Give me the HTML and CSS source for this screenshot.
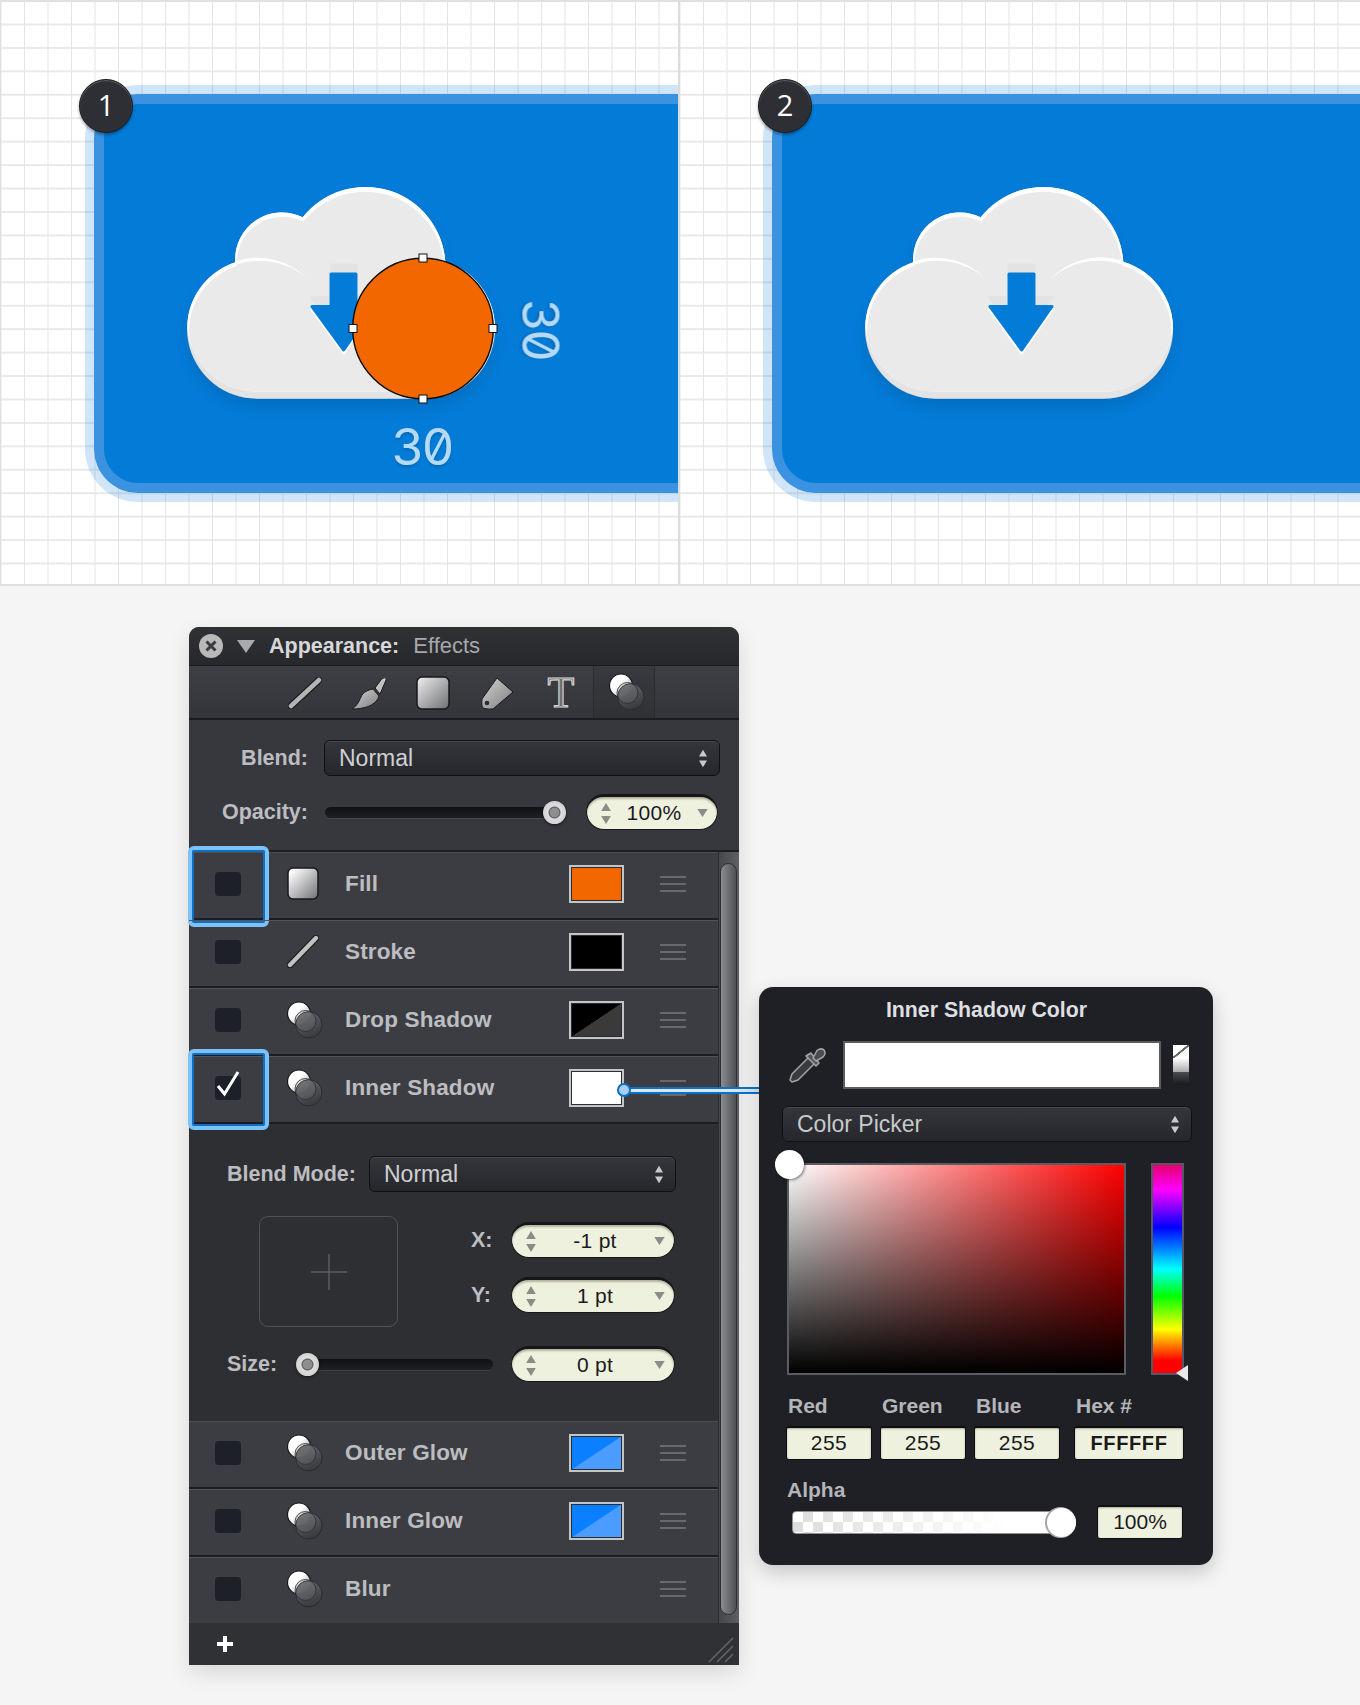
FILE: index.html
```html
<!DOCTYPE html>
<html lang="en">
<head>
<meta charset="utf-8">
<title>Appearance: Effects</title>
<link rel="stylesheet" href="styles.css">
</head>
<body>
<svg class="defs" aria-hidden="true">
  <defs>
    <linearGradient id="whiteball" x1="0.1" y1="0.1" x2="0.9" y2="0.9"><stop offset="0.4" stop-color="#fff"/><stop offset="1" stop-color="#9a9a9a"/></linearGradient>
    <linearGradient id="darkball" x1="0.2" y1="0" x2="0.6" y2="1"><stop offset="0" stop-color="#6a6b6e"/><stop offset="1" stop-color="#38393c"/></linearGradient>
    <linearGradient id="fillsq" x1="0" y1="0" x2="1" y2="1"><stop offset="0.1" stop-color="#fff"/><stop offset="1" stop-color="#6f7073"/></linearGradient>
    <linearGradient id="toolgrey" x1="0" y1="0" x2="1" y2="1"><stop offset="0" stop-color="#d2d2d2"/><stop offset="1" stop-color="#7d7d7d"/></linearGradient>
    <linearGradient id="toolsq" x1="0" y1="0" x2="1" y2="1"><stop offset="0.05" stop-color="#e8e8e8"/><stop offset="1" stop-color="#6e6f72"/></linearGradient>
    <filter id="cloudshadow" x="-15%" y="-15%" width="130%" height="140%"><feDropShadow dx="0" dy="9" stdDeviation="7" flood-color="#00518f" flood-opacity="0.3"/></filter>
    <filter id="numshadow" x="-20%" y="-20%" width="140%" height="140%"><feDropShadow dx="0" dy="2" stdDeviation="1.5" flood-color="#00518f" flood-opacity="0.5"/></filter>
    <path id="cloudpath" d="M176.7 238.7A70 70 0 0 1 153.3 102.2A46.7 46.7 0 0 1 220.7 57.3A80 80 0 0 1 363.3 101.7A70 70 0 0 1 341.7 238.7Z"/>
    <path id="arrowpath" d="M249 114H274V146.500H292L261.700 190L230 146.500H249Z"/>
    <clipPath id="cloudclip"><use href="#cloudpath"/></clipPath>
    <clipPath id="cloudbody"><use href="#cloudpath" transform="translate(0,-7)"/></clipPath>
    <g id="cloud">
      <g filter="url(#cloudshadow)"><use href="#cloudpath" fill="#e3e3e3"/></g>
      <g clip-path="url(#cloudclip)">
        <use href="#cloudpath" transform="translate(0,-7)" fill="#fff"/>
        <g clip-path="url(#cloudbody)">
          <use href="#cloudpath" transform="translate(262,153) scale(.988,.985) translate(-262,-150)" fill="#eaeaea"/>
        </g>
        <path d="M153 101.500A70 70 0 0 1 226 119A73 73 0 0 0 153 105Z" fill="#fff"/>
        <path d="M363.500 101A70 70 0 0 0 290 119.500A73 73 0 0 1 363.500 105Z" fill="#fff"/>
      </g>
      <use href="#arrowpath" transform="translate(0,-9)" fill="#e3e3e3" stroke="#e3e3e3" stroke-width="3" stroke-linejoin="round"/>
      <use href="#arrowpath" transform="translate(0,3)" fill="#fff" stroke="#fff" stroke-width="3" stroke-linejoin="round"/>
      <use href="#arrowpath" fill="#037cd8" stroke="#037cd8" stroke-width="3" stroke-linejoin="round"/>
    </g>
    <symbol id="fx" viewBox="0 0 36 38">
      <circle cx="12" cy="12.500" r="11.500" fill="url(#whiteball)" stroke="#141518" stroke-width="1.200"/>
      <circle cx="21.800" cy="23.800" r="13.200" fill="url(#darkball)" fill-opacity=".95" stroke="#2a2b2e" stroke-width="1"/>
      <circle cx="18.500" cy="20" r="10.500" fill="#8a8b8e" fill-opacity=".2" stroke="#2a2b2e" stroke-width=".8"/>
    </symbol>
    <symbol id="updown" viewBox="0 0 12 26">
      <path d="M6 0L12 10H0ZM6 26L0 16H12Z" fill="currentColor"/>
    </symbol>
    <symbol id="tri" viewBox="0 0 13 10"><path d="M0 0H13L6.500 10Z" fill="currentColor"/></symbol>
    <symbol id="lines" viewBox="0 0 26 16"><path d="M0 1H26M0 8H26M0 15H26" stroke="#77787c" stroke-width="1.600" fill="none"/></symbol>
  </defs>
</svg>

<main class="page">
  <section class="artboards">
    <div class="pane pane-first">
      <span class="badge">1</span>
      <div class="card">
        <svg class="art" viewBox="0 0 574 379" width="574" height="379">
          <use href="#cloud" transform="translate(-22,56)"/>
          <circle cx="319" cy="224.500" r="70.300" fill="#f26700" stroke="#0c0c0c" stroke-width="1.400"/>
          <g fill="#fff" stroke="#111" stroke-width="1">
            <rect x="315" y="150" width="8" height="8"/><rect x="315" y="291" width="8" height="8"/>
            <rect x="245" y="220.500" width="8" height="8"/><rect x="385" y="220.500" width="8" height="8"/>
          </g>
          <text class="dim" x="317.500" y="360.500" text-anchor="middle" filter="url(#numshadow)">30</text>
          <text class="dim" transform="translate(418.500,225) rotate(90)" text-anchor="middle" filter="url(#numshadow)">30</text>
        </svg>
      </div>
    </div>
    <div class="pane pane-second">
      <span class="badge">2</span>
      <div class="card">
        <svg class="art" viewBox="0 0 574 379" width="574" height="379">
          <use href="#cloud" transform="translate(-22,56)"/>
        </svg>
      </div>
    </div>
  </section>

  <section class="workspace">
    <div class="panel">
      <header class="panel-head">
        <span class="close"><svg viewBox="0 0 24 24" width="24" height="24"><circle cx="12" cy="12" r="12" fill="#b9b9ba"/><path d="M7.500 7.500L16.500 16.500M16.500 7.500L7.500 16.500" stroke="#3a3b3e" stroke-width="3"/></svg></span>
        <svg class="disclose" viewBox="0 0 18 13" width="18" height="13"><path d="M0 0H18L9 13Z" fill="#a9aaac"/></svg>
        <strong class="head-title">Appearance:</strong>
        <span class="head-sub">Effects</span>
      </header>

      <nav class="toolbar">
        <span class="tool"><svg viewBox="0 0 34 32" width="34" height="32"><path d="M3 29L31 3" stroke="#18191b" stroke-width="7" stroke-linecap="round"/><path d="M3 29L31 3" stroke="#b4b4b4" stroke-width="4.500" stroke-linecap="round"/></svg></span>
        <span class="tool"><svg viewBox="0 0 37 33" width="37" height="33"><path d="M24 11L31 1.500Q34 -.5 35.500 2L29 17Z" fill="#c2c2c2" stroke="#18191b"/><path d="M22 12L28 19C26 26 18 32 1 32C7 28 8 24 10 20C12 15 17 13 22 12Z" fill="url(#toolgrey)" stroke="#18191b"/></svg></span>
        <span class="tool"><svg viewBox="0 0 34 34" width="34" height="34"><rect x="1" y="1" width="32" height="32" rx="5" fill="url(#toolsq)" stroke="#18191b" stroke-width="1.500"/></svg></span>
        <span class="tool"><svg viewBox="0 0 33 33" width="33" height="33"><path d="M16 1L32 15L12 32Q9 32.500 3 31.500Q0 30.500 1 22Z" fill="url(#toolgrey)" stroke="#18191b"/><circle cx="6" cy="26" r="2.300" fill="#2b2c2f"/></svg></span>
        <span class="tool tool-t">T</span>
        <span class="tool tool-active"><svg width="36" height="38"><use href="#fx"/></svg></span>
      </nav>

      <div class="global">
        <div class="g-row">
          <span class="g-label">Blend:</span>
          <div class="select select-wide"><span>Normal</span><svg class="sel-arrows" width="8" height="19"><use href="#updown"/></svg></div>
        </div>
        <div class="g-row g-row-opacity">
          <span class="g-label">Opacity:</span>
          <div class="slider slider-opacity"><i class="knob knob-end"></i></div>
          <div class="pill pill-opacity"><svg class="pill-ud" width="10" height="21"><use href="#updown"/></svg><span class="pill-val">100%</span><svg class="pill-tri" width="11" height="8"><use href="#tri"/></svg></div>
        </div>
      </div>

      <div class="rows">
        <div class="row">
          <span class="check"></span>
          <svg width="32" height="33" viewBox="0 0 32 33"><rect x="1" y="1" width="30" height="31" rx="5" fill="url(#fillsq)" stroke="#17181a" stroke-width="1.500"/></svg>
          <span class="row-label">Fill</span>
          <span class="swatch swatch-orange"></span>
          <svg class="lines" width="26" height="16"><use href="#lines"/></svg>
          <span class="focus focus-first"></span>
        </div>
        <div class="row">
          <span class="check"></span>
          <svg width="32" height="33" viewBox="0 0 32 33"><path d="M3 30L29 3" stroke="#18191b" stroke-width="6.500" stroke-linecap="round"/><path d="M3 30L29 3" stroke="#c2c2c2" stroke-width="4.400" stroke-linecap="round"/></svg>
          <span class="row-label">Stroke</span>
          <span class="swatch swatch-black"></span>
          <svg class="lines" width="26" height="16"><use href="#lines"/></svg>
        </div>
        <div class="row">
          <span class="check"></span>
          <svg class="fx" width="36" height="38"><use href="#fx"/></svg>
          <span class="row-label">Drop Shadow</span>
          <span class="swatch swatch-shadow"></span>
          <svg class="lines" width="26" height="16"><use href="#lines"/></svg>
        </div>
        <div class="row">
          <span class="check check-on"><svg viewBox="0 0 26 30" width="26" height="30"><path d="M3 18L9.500 26L23 4" fill="none" stroke="#fff" stroke-width="3"/></svg></span>
          <svg class="fx" width="36" height="38"><use href="#fx"/></svg>
          <span class="row-label">Inner Shadow</span>
          <span class="swatch swatch-white"></span>
          <svg class="lines" width="26" height="16"><use href="#lines"/></svg>
          <span class="focus focus-second"></span>
          <span class="wire"><i class="wire-dot"></i></span>
        </div>
      </div>

      <div class="detail">
        <div class="d-blend">
          <span class="d-label">Blend Mode:</span>
          <div class="select select-mode"><span>Normal</span><svg class="sel-arrows" width="8" height="19"><use href="#updown"/></svg></div>
        </div>
        <div class="d-offset">
          <div class="origin"><svg viewBox="0 0 36 36" width="36" height="36"><path d="M18 0V36M0 18H36" stroke="#5c5d61" stroke-width="1.500"/></svg></div>
          <div class="d-fields">
            <div class="d-field"><span class="d-axis">X:</span><div class="pill pill-num"><svg class="pill-ud" width="10" height="21"><use href="#updown"/></svg><span class="pill-val">-1 pt</span><svg class="pill-tri" width="11" height="8"><use href="#tri"/></svg></div></div>
            <div class="d-field"><span class="d-axis">Y:</span><div class="pill pill-num"><svg class="pill-ud" width="10" height="21"><use href="#updown"/></svg><span class="pill-val">1 pt</span><svg class="pill-tri" width="11" height="8"><use href="#tri"/></svg></div></div>
          </div>
        </div>
        <div class="d-size">
          <span class="d-size-label">Size:</span>
          <div class="slider slider-size"><i class="knob knob-start"></i></div>
          <div class="pill pill-num"><svg class="pill-ud" width="10" height="21"><use href="#updown"/></svg><span class="pill-val">0 pt</span><svg class="pill-tri" width="11" height="8"><use href="#tri"/></svg></div>
        </div>
      </div>

      <div class="rows rows-lower">
        <div class="row">
          <span class="check"></span>
          <svg class="fx" width="36" height="38"><use href="#fx"/></svg>
          <span class="row-label">Outer Glow</span>
          <span class="swatch swatch-blue"></span>
          <svg class="lines" width="26" height="16"><use href="#lines"/></svg>
        </div>
        <div class="row">
          <span class="check"></span>
          <svg class="fx" width="36" height="38"><use href="#fx"/></svg>
          <span class="row-label">Inner Glow</span>
          <span class="swatch swatch-blue"></span>
          <svg class="lines" width="26" height="16"><use href="#lines"/></svg>
        </div>
        <div class="row row-last">
          <span class="check"></span>
          <svg class="fx" width="36" height="38"><use href="#fx"/></svg>
          <span class="row-label">Blur</span>
          <svg class="lines" width="26" height="16"><use href="#lines"/></svg>
        </div>
      </div>

      <div class="scroll"><i class="scroll-thumb"></i></div>

      <footer class="panel-foot">
        <svg viewBox="0 0 16 16" width="16" height="16"><path d="M8 0V16M0 8H16" stroke="#fff" stroke-width="4"/></svg>
        <svg class="grip" viewBox="0 0 26 26" width="26" height="26"><path d="M1 25L25 1M9 25L25 9M17 25L25 17" stroke="#66676b" stroke-width="1.500" fill="none"/></svg>
      </footer>
    </div>

    <aside class="picker">
      <h2 class="picker-title">Inner Shadow Color</h2>
      <div class="picker-top">
        <svg class="dropper" viewBox="0 0 39 37" width="39" height="37">
          <g fill="#3a3b3f" stroke="#a3a4a6" stroke-width="1.500" stroke-linejoin="round">
            <path d="M4 27L21 10L27 16L10 33L4 35L2 33Z"/>
            <path d="M18 9L28 19L31 16L23 6Z" fill="#55565a"/>
            <path d="M25 11L29 3.500Q33 0.500 36 3Q38.500 6.500 35 10L28 14Z" fill="#4a4b4f"/>
          </g>
        </svg>
        <div class="picker-well"></div>
        <div class="minis"><span class="mini mini-none"></span><span class="mini mini-white"></span><span class="mini mini-black"></span></div>
      </div>
      <div class="select select-picker"><span>Color Picker</span><svg class="sel-arrows" width="8" height="19"><use href="#updown"/></svg></div>
      <div class="spectrum">
        <div class="sv"><i class="sv-knob"></i></div>
        <div class="hue"><i class="hue-mark"></i></div>
      </div>
      <div class="channels">
        <div class="chan chan-r"><span class="chan-label">Red</span><span class="input">255</span></div>
        <div class="chan chan-g"><span class="chan-label">Green</span><span class="input">255</span></div>
        <div class="chan chan-b"><span class="chan-label">Blue</span><span class="input">255</span></div>
        <div class="chan chan-h"><span class="chan-label">Hex #</span><span class="input input-hex">FFFFFF</span></div>
      </div>
      <div class="alpha-label">Alpha</div>
      <div class="alpha">
        <div class="alpha-track"><i class="alpha-knob"></i></div>
        <span class="input input-alpha">100%</span>
      </div>
    </aside>
  </section>
</main>
</body>
</html>
```

FILE: styles.css
```css
* { box-sizing: border-box; }
html, body { margin: 0; padding: 0; }
body {
  width: 1360px;
  height: 1705px;
  overflow: hidden;
  background: #f5f5f5;
  font-family: "Liberation Sans", Arial, sans-serif;
}
.defs { display: block; width: 0; height: 0; }
.page { display: flex; flex-direction: column; }

/* artboards */
.artboards { display: flex; height: 586px; background: #fff; }
.pane {
  position: relative;
  width: 680px;
  height: 586px;
  overflow: hidden;
  border-top: 2px solid #e0e0e0;
  border-bottom: 2px solid #e0e0e0;
  border-right: 2px solid #dcdcdc;
  padding: 102px 0 0 104px;
  background-color: #fff;
  background-image:
    linear-gradient(to right, #e2e4e8 1px, transparent 1px),
    linear-gradient(to bottom, #e7e9eb 1.5px, transparent 1.5px);
  background-size: 23.5px 23.45px;
  background-position: 23px 21.5px;
}
.pane-first { border-left: 1px solid #e0e0e0; padding-left: 103px; }
.pane-second { padding-left: 102px; border-right: 0; }
.card {
  width: 700px;
  height: 379px;
  background: #037cd8;
  border-radius: 34px 0 0 34px;
  box-shadow: 0 0 0 10px #3a92e0, 0 0 0 19px rgba(0, 110, 220, .18);
}
.art { display: block; overflow: visible; }
.dim {
  font-family: "Inter", "DejaVu Sans Mono", monospace;
  font-feature-settings: "zero", "tnum";
  font-weight: 400;
  font-size: 51px;
  letter-spacing: -3px;
  fill: #b4daf7;
}
.badge {
  position: absolute;
  left: 78px;
  top: 77px;
  z-index: 2;
  width: 54px;
  height: 54px;
  border-radius: 50%;
  background: #2e2f34;
  border: 1.5px solid #1b1c1f;
  box-shadow: 0 2px 3px rgba(0, 0, 0, .35), inset 0 1px 1px rgba(255, 255, 255, .25);
  color: #fff;
  font: 29px/50px "Open Sans", sans-serif;
  text-align: center;
}

/* workspace */
.workspace { display: flex; align-items: flex-start; padding: 41px 0 0 189px; }

/* panel */
.panel {
  position: relative;
  width: 550px;
  height: 1038px;
  background: #37383d;
  border-radius: 10px 10px 0 0;
  box-shadow: 0 8px 22px rgba(0, 0, 0, .12);
}
.panel-head {
  display: flex;
  align-items: center;
  height: 39px;
  padding-left: 10px;
  background: linear-gradient(#303135, #27282c);
  border-radius: 10px 10px 0 0;
  border-bottom: 1px solid #1a1b1e;
}
.close { display: block; width: 24px; height: 24px; }
.close svg { display: block; }
.disclose { margin-left: 14px; }
.head-title { margin-left: 14px; font-size: 21.5px; color: #d7d7d9; }
.head-sub { margin-left: 14px; font-size: 22px; color: #a7a8ab; }

.toolbar {
  display: flex;
  align-items: stretch;
  height: 54px;
  padding: 2px 0 0 84px;
  background: linear-gradient(#3e3f44, #34353a);
  border-bottom: 2px solid #1b1c1f;
}
.tool { display: flex; align-items: center; justify-content: center; width: 64px; }
.tool-t {
  font: 44px/1 "Liberation Serif", serif;
  color: #6f7073;
  -webkit-text-stroke: 1.2px #cfcfcf;
}
.tool-active {
  width: 62px;
  padding-left: 6px;
  margin-top: -2px;
  background: rgba(0, 0, 0, .07);
  border-left: 1px solid #2b2c2f;
  border-right: 1px solid #2b2c2f;
}

.global { height: 132px; padding-top: 20px; border-bottom: 2px solid #1c1d20; }
.g-row { display: flex; align-items: center; }
.g-row-opacity { margin-top: 18px; }
.g-label {
  width: 119px;
  text-align: right;
  font-size: 21.5px;
  font-weight: 700;
  color: #bcbdc0;
}
.select {
  display: flex;
  align-items: center;
  justify-content: space-between;
  height: 36px;
  padding: 0 12px 0 14px;
  background: linear-gradient(#35363b, #26272c);
  border: 1.5px solid #0f1013;
  border-radius: 6px;
  box-shadow: inset 0 1px 0 rgba(255, 255, 255, .1);
  font-size: 23px;
  color: #cfd0d2;
}
.sel-arrows { color: #c9cacc; }
.select-wide { width: 396px; margin-left: 16px; }
.slider {
  position: relative;
  height: 11px;
  background: linear-gradient(#0f1012, #1f2023);
  border-radius: 6px;
  box-shadow: 0 1px 0 rgba(255, 255, 255, .08);
}
.slider-opacity { width: 230px; margin-left: 17px; }
.knob {
  position: absolute;
  top: -6px;
  width: 23px;
  height: 23px;
  border-radius: 50%;
  background: radial-gradient(circle, #8d8e8f 0 4.5px, #66676a 5px 5.5px, #dedede 6.5px, #c6c6c6);
  box-shadow: 0 1px 3px rgba(0, 0, 0, .6);
}
.knob-end { right: -11px; }
.knob-start { left: -1px; }

.pill {
  display: flex;
  align-items: center;
  height: 36px;
  padding: 0 9px 0 14px;
  background: #eff1df;
  border-radius: 18px;
  border: 1.5px solid #16171a;
  border-top-width: 3px;
  box-shadow: inset 0 2px 2px rgba(70, 70, 40, .35);
  font-size: 21px;
  color: #1b1b1b;
}
.pill-ud, .pill-tri { flex: none; color: #8b8c86; }
.pill-val { flex: 1; text-align: center; letter-spacing: .3px; }
.pill-opacity { width: 132px; margin-left: 31px; }
.pill-num { width: 164px; }

/* rows */
.rows { width: 529px; background: #3c3d42; }
.row {
  position: relative;
  display: grid;
  grid-template-columns: 72px 58px 224px 55px 36px 26px;
  align-items: center;
  height: 68px;
  padding: 0 0 3px 26px;
  border-bottom: 2px solid #1c1d20;
  box-shadow: inset 0 1px 0 #54555a;
  color: #bcbdc0;
}
.rows > .row:first-child { box-shadow: inset 0 1px 0 #4d4e52; }
.row-last { height: 66px; border-bottom: 0; }
.check {
  display: block;
  position: relative;
  width: 26px;
  height: 24px;
  border-radius: 4px;
  background: #1d2029;
}
.check-on svg { position: absolute; left: 0; top: -8px; }
.row-label { grid-column: 3; font-size: 22.5px; font-weight: 700; letter-spacing: .15px; }
.swatch {
  display: block;
  grid-column: 4;
  width: 55px;
  height: 38px;
  border: 2px solid #c4c5c7;
  box-shadow: inset 0 0 0 1px #2b2c30;
}
.swatch-orange { background: #f26700; }
.swatch-black { background: #000; }
.swatch-white { background: #fff; }
.swatch-shadow { background: linear-gradient(to bottom right, #000 49.5%, #3a3a3a 50.5%); }
.swatch-blue { background: linear-gradient(to bottom right, #0a7fff 49.5%, #4a9dff 50.5%); }
.lines { grid-column: 6; }
.focus {
  position: absolute;
  left: -1px;
  width: 81px;
  height: 81px;
  border-radius: 6px;
  border: 4px solid #7cc1f7;
  box-shadow: inset 0 0 0 2px #0f6fc2;
  pointer-events: none;
}
.focus-first { top: -6px; }
.focus-second { top: -7px; }
.wire {
  position: absolute;
  z-index: 3;
  left: 434px;
  top: 31px;
  width: 138px;
  height: 7px;
  background: #d5e7f8;
  border-top: 2px solid #0e70c2;
  border-bottom: 2px solid #0e70c2;
}
.wire-dot {
  position: absolute;
  left: -6px;
  top: -6px;
  width: 14px;
  height: 14px;
  border-radius: 50%;
  background: #a9cdf4;
  border: 2px solid #0e70c2;
}

/* detail */
.detail {
  width: 529px;
  height: 297px;
  padding: 32px 0 0 38px;
  background: #2e2f33;
}
.d-blend { display: flex; align-items: center; }
.d-label, .d-size-label, .d-axis {
  font-size: 21.5px;
  font-weight: 700;
  color: #bcbdc0;
}
.d-label { width: 142px; }
.select-mode { width: 307px; }
.d-offset { display: flex; margin: 24px 0 0 32px; }
.origin {
  display: flex;
  align-items: center;
  justify-content: center;
  width: 139px;
  height: 111px;
  border: 1.5px solid #505155;
  border-radius: 9px;
}
.d-fields { display: flex; flex-direction: column; gap: 19px; margin: 6px 0 0 73px; }
.d-field { display: flex; align-items: center; }
.d-axis { width: 40px; }
.d-size { display: flex; align-items: center; margin-top: 19px; }
.d-size-label { width: 70px; }
.slider-size { width: 196px; margin-right: 18px; }

/* scrollbar */
.scroll {
  position: absolute;
  right: 0;
  top: 225px;
  width: 21px;
  height: 771px;
  background: linear-gradient(to right, #46474a, #5e5f63);
  border-left: 1px solid #2b2c2f;
  padding: 11px 2px 0 1px;
}
.scroll-thumb {
  display: block;
  height: 752px;
  border-radius: 9px;
  background: linear-gradient(to right, #8b8c8f, #6a6b6f 55%, #505155);
  border: 1px solid #2e2f32;
}

.panel-foot {
  position: absolute;
  left: 0;
  right: 0;
  bottom: 0;
  display: flex;
  align-items: center;
  justify-content: space-between;
  height: 42px;
  padding: 0 5px 0 28px;
  background: #303135;
}
.grip { margin-top: 12px; }

/* colour picker */
.picker {
  position: relative;
  z-index: 4;
  width: 454px;
  height: 578px;
  margin: 360px 0 0 20px;
  padding: 0 22px 0 23px;
  background: #1f2025;
  border-radius: 14px;
  box-shadow: 0 7px 20px rgba(0, 0, 0, .2);
}
.picker-title {
  margin: 0;
  padding-top: 11px;
  height: 54px;
  font-size: 21.3px;
  line-height: 25px;
  font-weight: 700;
  color: #dedfe1;
  text-align: center;
}
.picker-top { display: flex; align-items: center; margin-left: 6px; }
.dropper { flex: none; }
.picker-well {
  width: 318px;
  height: 48px;
  margin-left: 16px;
  background: #fff;
  border: 2px solid #5b5c61;
}
.minis { display: flex; flex-direction: column; width: 16px; margin-left: 12px; }
.mini { display: block; height: 13.5px; }
.mini-none { background: linear-gradient(to bottom right, #fff 44%, #66676b 46%, #66676b 54%, #fff 56%); }
.mini-white { background: linear-gradient(#fff, #aaa); }
.mini-black { background: linear-gradient(#4a4b4e, #18191c); }
.select-picker { width: 410px; margin-top: 17px; color: #c8c9cb; }
.spectrum { display: flex; margin: 21px 0 0 5px; }
.sv {
  position: relative;
  width: 339px;
  height: 212px;
  border: 2px solid #5b5c61;
  background:
    linear-gradient(to bottom, rgba(0, 0, 0, 0), #000),
    linear-gradient(to right, #fff, #f00);
}
.sv-knob {
  position: absolute;
  left: -14px;
  top: -15px;
  width: 29px;
  height: 29px;
  border-radius: 50%;
  background: #fff;
  box-shadow: 1px 1px 3px rgba(0, 0, 0, .5);
}
.hue {
  position: relative;
  width: 33px;
  height: 212px;
  margin-left: 25px;
  border: 2px solid #55566a;
  background: linear-gradient(to bottom, #e6006e 0%, #ff00ff 12%, #0000ff 30%, #00ffff 50%, #00ff00 63%, #ffff00 79%, #ff0000 94%, #ff0000 100%);
}
.hue-mark {
  position: absolute;
  left: 23px;
  bottom: -8px;
  width: 0;
  height: 0;
  border-top: 8px solid transparent;
  border-bottom: 8px solid transparent;
  border-right: 12px solid #e8e8e8;
}
.channels { display: flex; margin: 18px 0 0 4px; }
.chan { display: flex; flex-direction: column; width: 86px; }
.chan-r, .chan-g { margin-right: 8px; }
.chan-b { margin-right: 14px; }
.chan-h { width: 110px; }
.chan-label {
  height: 33px;
  padding-left: 2px;
  font-size: 21px;
  line-height: 26px;
  font-weight: 700;
  color: #b4b5b9;
}
.input {
  display: block;
  height: 34px;
  background: #eff1df;
  border: 1.5px solid #0e0f11;
  border-top-width: 2.5px;
  border-radius: 3px;
  box-shadow: inset 0 1px 2px rgba(70, 70, 40, .4);
  font-size: 21px;
  line-height: 30px;
  letter-spacing: .5px;
  text-align: center;
  color: #1a1a1a;
}
.input-hex { font-weight: 700; font-size: 20px; letter-spacing: .6px; }
.alpha-label {
  margin: 17px 0 0 5px;
  height: 26px;
  font-size: 21px;
  line-height: 26px;
  font-weight: 700;
  color: #b4b5b9;
}
.alpha { display: flex; align-items: center; margin-top: 2px; }
.alpha-track {
  position: relative;
  width: 270px;
  height: 23px;
  margin-left: 10px;
  border-radius: 4px;
  border: 1px solid #8e8f92;
  background:
    linear-gradient(to right, rgba(255, 255, 255, .1), #fff 80%),
    conic-gradient(#d9d9d9 25%, #fff 25% 50%, #d9d9d9 50% 75%, #fff 75%) 0 0 / 20px 20px;
}
.alpha-knob {
  position: absolute;
  right: -15px;
  top: -4px;
  width: 29px;
  height: 29px;
  border-radius: 50%;
  background: #fff;
  box-shadow: -1px 0 0 1px #a5a6a8;
}
.input-alpha { width: 86px; margin-left: 35px; letter-spacing: 0; }
```
